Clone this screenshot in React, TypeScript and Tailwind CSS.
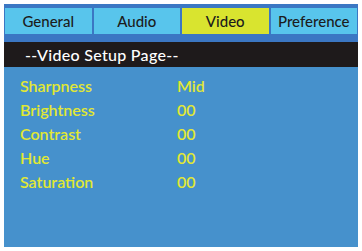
import React from "react";

const tabs = ["General", "Audio", "Video", "Preference"];

const rows = [
  { label: "Sharpness", value: "Mid" },
  { label: "Brightness", value: "00" },
  { label: "Contrast", value: "00" },
  { label: "Hue", value: "00" },
  { label: "Saturation", value: "00" },
];

export default function App() {
  const active = "Video";

  return (
    <div className="w-[362px] h-[251px] bg-white pt-[4px] pl-[4px] font-['Lato',sans-serif]">
      <div className="w-[354px] h-[243px] flex flex-col bg-[#3b77c3]">
        <div className="flex gap-[2px] px-[1px] pt-[4px] h-[38px] pb-[8px]">
          {tabs.map((t) => (
            <div
              key={t}
              className={
                t === active
                  ? "flex-1 flex items-center justify-center bg-[#d9e42f] text-[15px] text-[#1c1c1c] font-medium"
                  : "flex-1 flex items-center justify-center bg-[#58c5ec] text-[15px] text-[#1c1c1c] font-medium"
              }
            >
              {t}
            </div>
          ))}
        </div>
        <div className="h-[25px] bg-[#1e1a1b] text-white text-[16px] font-medium tracking-[0.3px] flex items-center pl-[21px]">
          --Video Setup Page--
        </div>
        <div className="flex-1 bg-[#4691cc] pt-[7px] pl-[16px]">
          {rows.map((r) => (
            <div
              key={r.label}
              className="flex h-[24px] items-center text-[16px] font-semibold text-[#e1e833]"
            >
              <span className="w-[157px]">{r.label}</span>
              <span>{r.value}</span>
            </div>
          ))}
        </div>
      </div>
    </div>
  );
}
